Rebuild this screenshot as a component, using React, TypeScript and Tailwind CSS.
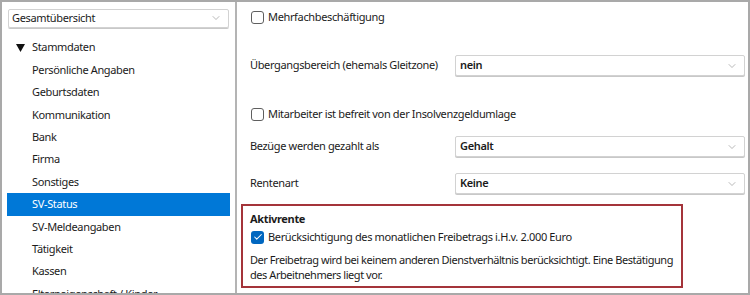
import { Check, ChevronDown } from "lucide-react";

const treeItems = [
    "Persönliche Angaben",
    "Geburtsdaten",
    "Kommunikation",
    "Bank",
    "Firma",
    "Sonstiges",
    "SV-Status",
    "SV-Meldeangaben",
    "Tätigkeit",
    "Kassen",
    "Elterneigenschaft / Kinder",
];

function Box({ checked = false }: { checked?: boolean }) {
    return checked ? (
        <span className="flex h-[13px] w-[13px] shrink-0 items-center justify-center rounded-[3px] bg-[#0067c0]">
            <Check size={10} strokeWidth={2.5} className="text-white" aria-hidden="true" />
        </span>
    ) : (
        <span className="h-[13px] w-[13px] shrink-0 rounded-[3px] border border-[#5f5f5f] bg-white" />
    );
}

function Select({ value }: { value: string }) {
    return (
        <div className="flex h-[21px] flex-1 items-center justify-between rounded-[2px] border border-[#d2d2d2] bg-white pl-[4px] pr-[6px] shadow-[0_1px_0_#c8c8c8]">
            <span className="font-semibold text-[#1b1b1b]">{value}</span>
            <ChevronDown size={12} strokeWidth={1.2} className="text-[#8a8a8a]" aria-hidden="true" />
        </div>
    );
}

export default function App() {
    return (
        <div className="flex h-[295px] w-[750px] overflow-hidden border-2 border-[#a9a9a9] bg-white font-['Noto_Sans',sans-serif] text-[11px] tracking-[-0.35px] text-[#1b1b1b]">
            <aside className="flex w-[235px] shrink-0 flex-col border-r-2 border-[#b4b4b4] px-[5px] pt-[7px]">
                <div className="mx-[1px] flex h-[21px] items-center justify-between rounded-[2px] border border-[#d2d2d2] pl-[3px] pr-[6px] shadow-[0_1px_0_#c8c8c8]">
                    <span>Gesamtübersicht</span>
                    <ChevronDown size={12} strokeWidth={1.2} className="text-[#8a8a8a]" aria-hidden="true" />
                </div>
                <div className="mt-[9px] flex flex-col">
                    <div className="flex h-[22.4px] items-center">
                        <span className="flex w-[25px] pl-[9px]">
                            <svg width="9" height="8" viewBox="0 0 9 8" aria-hidden="true">
                                <path d="M0 0H9L4.5 8Z" fill="#111" />
                            </svg>
                        </span>
                        <span>Stammdaten</span>
                    </div>
                    {treeItems.map((item) => (
                        <div
                            key={item}
                            className={
                                item === "SV-Status"
                                    ? "flex h-[22.4px] items-center bg-[#0078d7] pl-[25px] text-white"
                                    : "flex h-[22.4px] items-center pl-[25px]"
                            }
                        >
                            {item}
                        </div>
                    ))}
                </div>
            </aside>

            <main className="flex min-w-0 flex-1 flex-col pr-[3px] pt-[8px]">
                <label className="flex h-[14px] items-center gap-[4px] pl-[14px]">
                    <Box />
                    <span>Mehrfachbeschäftigung</span>
                </label>

                <div className="mt-[31px] flex items-center pl-[13px]">
                    <span className="w-[205px] shrink-0">Übergangsbereich (ehemals Gleitzone)</span>
                    <Select value="nein" />
                </div>

                <label className="mt-[31px] flex h-[14px] items-center gap-[4px] pl-[14px]">
                    <Box />
                    <span>Mitarbeiter ist befreit von der Insolvenzgeldumlage</span>
                </label>

                <div className="mt-[15px] flex items-center pl-[13px]">
                    <span className="w-[205px] shrink-0">Bezüge werden gezahlt als</span>
                    <Select value="Gehalt" />
                </div>

                <div className="mt-[16px] flex items-center pl-[13px]">
                    <span className="w-[205px] shrink-0">Rentenart</span>
                    <Select value="Keine" />
                </div>

                <section className="ml-[4px] mt-[10px] w-[442px] border-2 border-[#a4343a] pb-[4px] pl-[7px] pr-[4px] pt-[5px]">
                    <p className="font-bold leading-[16px]">Aktivrente</p>
                    <label className="mt-[3px] flex h-[14px] items-center gap-[4px] pl-[1px]">
                        <Box checked />
                        <span>Berücksichtigung des monatlichen Freibetrags i.H.v. 2.000 Euro</span>
                    </label>
                    <p className="mt-[8px] whitespace-nowrap leading-[15px] tracking-[-0.45px]">
                        Der Freibetrag wird bei keinem anderen Dienstverhältnis berücksichtigt. Eine Bestätigung
                        <br />
                        des Arbeitnehmers liegt vor.
                    </p>
                </section>
            </main>
        </div>
    );
}
